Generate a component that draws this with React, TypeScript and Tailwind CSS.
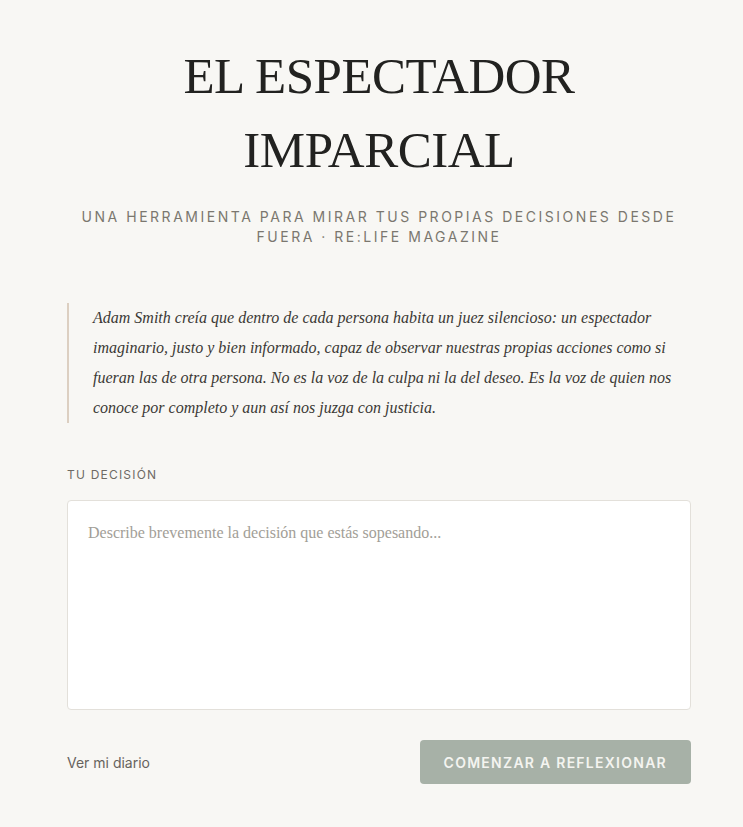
import { useState } from 'react'

const serif = { fontFamily: '"Liberation Serif", "DejaVu Serif", serif' }

export default function App() {
    const [decision, setDecision] = useState('')

    return (
        <div className="min-h-[827px] bg-[#f8f7f4] font-['Inter',sans-serif]">
            <div className="pl-[67px] pr-[52px] pt-[39px] pb-10">
                {/* Header */}
                <h1
                    className="text-center text-[51px] leading-[74px] font-normal text-[#222220] tracking-[-0.01em]"
                    style={serif}
                >
                    EL ESPECTADOR
                    <br />
                    IMPARCIAL
                </h1>
                <p className="mt-5 text-center text-[14px] leading-5 uppercase tracking-[0.18em] text-[#7b776f]">
                    Una herramienta para mirar tus propias decisiones desde fuera · Re:Life Magazine
                </p>

                {/* Quote */}
                <blockquote
                    className="mt-14 border-l-2 border-[#dccfc1] pl-6 text-[16px] leading-[30px] italic text-[#3b3935]"
                    style={serif}
                >
                    Adam Smith creía que dentro de cada persona habita un juez silencioso: un espectador imaginario,
                    justo y bien informado, capaz de observar nuestras propias acciones como si fueran las de otra
                    persona. No es la voz de la culpa ni la del deseo. Es la voz de quien nos conoce por completo y
                    aun así nos juzga con justicia.
                </blockquote>

                {/* Decision */}
                <label className="mt-[43px] block text-[12px] leading-[18px] uppercase tracking-[0.1em] text-[#6e6a64]">
                    Tu decisión
                </label>
                <textarea
                    value={decision}
                    onChange={(e) => setDecision(e.target.value)}
                    placeholder="Describe brevemente la decisión que estás sopesando..."
                    className="mt-4 block w-full h-[210px] resize-none rounded bg-white border border-[#e3e0da] px-5 py-5 text-[16px] leading-6 text-[#2f2d2a] placeholder:text-[#a29e97] outline-none"
                    style={serif}
                />

                {/* Actions */}
                <div className="mt-[30px] flex items-center justify-between">
                    <a href="#" className="text-[14px] text-[#67635d]">
                        Ver mi diario
                    </a>
                    <button
                        disabled={!decision.trim()}
                        className="h-11 px-6 rounded bg-[#a7b1a7] text-[14px] font-semibold uppercase tracking-[0.09em] text-[#f4f4f0]"
                    >
                        Comenzar a reflexionar
                    </button>
                </div>
            </div>
        </div>
    )
}
